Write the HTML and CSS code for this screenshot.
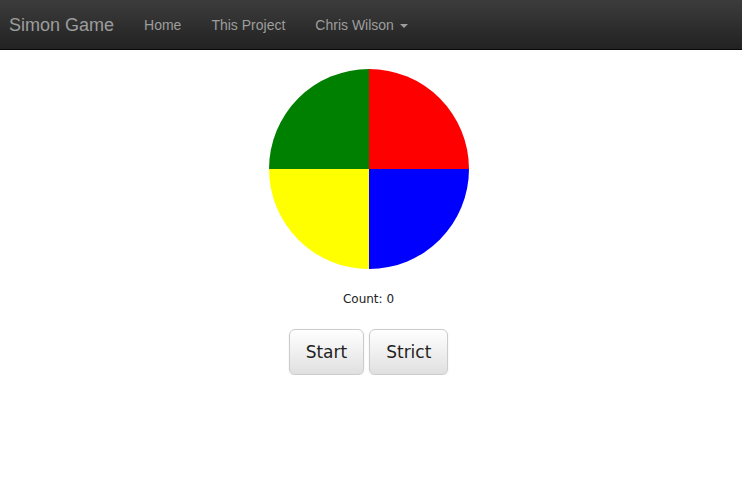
FILE: index.html
```html
<!DOCTYPE html>
<html>
<head>
<meta charset="utf-8">
<link rel="stylesheet" href="styles.css">
</head>
<body>
<nav class="navbar">
  <a class="brand">Simon Game</a>
  <ul class="nav">
    <li><a>Home</a></li>
    <li><a>This Project</a></li>
    <li><a>Chris Wilson <span class="caret"></span></a></li>
  </ul>
</nav>
<main class="game">
  <div class="board">
    <div class="q green"></div>
    <div class="q red"></div>
    <div class="q yellow"></div>
    <div class="q blue"></div>
  </div>
  <p class="count">Count: 0</p>
  <div class="buttons">
    <button class="btn">Start</button>
    <button class="btn">Strict</button>
  </div>
</main>
</body>
</html>
```
FILE: styles.css
```css
html, body {
  margin: 0;
  padding: 0;
  background: #fff;
  font-family: "Liberation Sans", Arial, sans-serif;
}
.navbar {
  height: 49px;
  border-bottom: 1px solid #080808;
  background: linear-gradient(to bottom, #3c3c3c 0%, #222 100%);
  display: flex;
  align-items: center;
  padding-left: 9px;
}
.brand {
  color: #9d9d9d;
  font-size: 18px;
  line-height: 20px;
  margin-right: 15px;
}
.nav {
  list-style: none;
  margin: 0;
  padding: 0;
  display: flex;
}
.nav a {
  display: block;
  padding: 0 15px;
  color: #9d9d9d;
  font-size: 14px;
  line-height: 20px;
}
.caret {
  display: inline-block;
  width: 0;
  height: 0;
  margin-left: 2px;
  vertical-align: middle;
  border-top: 4px solid #9d9d9d;
  border-left: 4px solid transparent;
  border-right: 4px solid transparent;
}
.game {
  display: flex;
  flex-direction: column;
  align-items: center;
  padding-top: 19px;
  padding-right: 5px;
}
.board {
  width: 200px;
  height: 200px;
  border-radius: 50%;
  overflow: hidden;
  display: grid;
  grid-template-columns: 100px 100px;
  grid-template-rows: 100px 100px;
}
.green { background: #008000; }
.red { background: #ff0000; }
.yellow { background: #ffff00; }
.blue { background: #0000ff; }
.count {
  margin: 22px 0 0;
  font-family: "DejaVu Sans", sans-serif;
  font-size: 12px;
  line-height: 16px;
  color: #222;
}
.buttons {
  margin-top: 22px;
  display: flex;
  gap: 5px;
}
.btn {
  font-family: "DejaVu Sans", sans-serif;
  font-size: 17px;
  color: #222;
  height: 46px;
  padding: 0 16px;
  border: 1px solid #ccc;
  border-radius: 6px;
  background: linear-gradient(to bottom, #fff 0%, #e0e0e0 100%);
  box-shadow: inset 0 1px 0 rgba(255,255,255,.15), 0 1px 2px rgba(0,0,0,.1);
}
```
